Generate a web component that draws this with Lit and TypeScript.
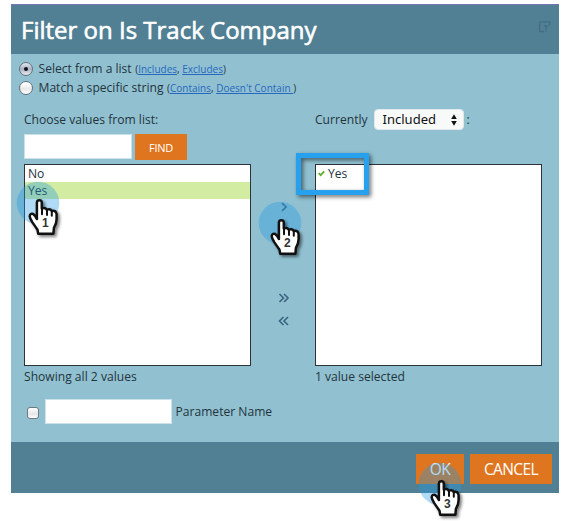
import { LitElement, html, css, svg } from "lit";
import { customElement, property } from "lit/decorators.js";

@customElement("step-pointer")
class StepPointer extends LitElement {
  @property() step = "1";
  static styles = css`
    :host { position: absolute; width: 54px; height: 64px; pointer-events: none; }
    svg { display: block; overflow: visible; }
    .halo { fill: #2499e4; fill-opacity: 0.36; }
    .hand { fill: #fff; stroke: #111; stroke-width: 2.5; stroke-linejoin: round; filter: drop-shadow(2px 2px 1.5px rgba(0, 0, 0, 0.5)); }
    .fold { fill: none; stroke: #111; stroke-width: 2; stroke-linecap: round; }
    .num { font: bold 12px "Liberation Sans", Arial, sans-serif; fill: #333; text-anchor: middle; }
  `;
  render() {
    return html`<svg width="54" height="64" viewBox="0 0 54 64">
      <circle class="halo" cx="22" cy="22" r="21.3"></circle>
      <path class="hand" d="M20.9 34.5V21.5Q21.1 19.2 23.3 19.2Q25.6 19.2 25.8 21.5V27.6Q29 26 30.8 28.7Q34.2 27.3 35.8 30Q40.2 29.2 40.6 33.1V38Q40.6 42.5 37.9 46.8L37.4 52.7H22.2L21.5 48.8Q18.8 44.8 16.4 41.4Q13.8 37.3 13.7 35.3Q14.1 32 17.2 33Q19.1 34.4 20.9 38Z"></path>
      <path class="fold" d="M20.9 33V38M26 28V33.3M31 29.3V34M35.8 30.7V34.8"></path>
      <text class="num" x="29.3" y="46.4">${this.step}</text>
    </svg>`;
  }
}

@customElement("app-root")
class AppRoot extends LitElement {
  static styles = css`
    :host { display: block; position: relative; width: 568px; height: 521px; overflow: hidden; background: #fff; color: #24343c; font: 12.1px/17px "Open Sans", sans-serif; }
    * { box-sizing: border-box; }
    .dialog { width: 548px; height: 489px; margin: 0 0 0 11px; display: flex; flex-direction: column; background: #91c1d1; }
    .wrap { padding-top: 4px; }
    header { height: 50px; flex: none; border-top: 1px solid #7775ba; background: #518094; display: flex; justify-content: space-between; padding: 0 8px 0 10px; }
    h1 { margin: 7px 0 0; font: 400 24px/36px "Open Sans", sans-serif; color: #fff; -webkit-text-stroke: 0.6px #fff; white-space: nowrap; }
    .help { margin-top: 16px; display: block; }
    main { height: 388px; padding: 5px 17px 0 8px; }
    .choice { height: 19px; display: flex; align-items: center; white-space: nowrap; }
    .radio { width: 14px; height: 14px; border-radius: 50%; border: 1px solid #66727a; background: linear-gradient(#fff 20%, #e8e8e8 55%, #fff); margin-right: 5.5px; display: grid; place-items: center; }
    .on { background: linear-gradient(#e4e8f0, #aab3c2 50%, #e9edf4); }
    .on::after { content: ""; width: 4px; height: 4px; border-radius: 50%; background: #101418; }
    .links { font-size: 10px; margin-left: 3.5px; padding-top: 1px; }
    a { color: #2668bd; text-decoration: underline; }
    .lists { display: grid; grid-template-columns: 227px 64px 227px; margin: 12px 0 0 5px; }
    .top { height: 55px; }
    .label { height: 25px; line-height: 21px; }
    .find { display: flex; gap: 3px; }
    .field { background: #fff; border: 1px solid #cbe2ea; height: 25px; width: 108px; }
    button { border: 0; padding: 0; background: #df761f; color: #fff; font-family: "Open Sans", sans-serif; white-space: nowrap; }
    .go { width: 52px; height: 26px; font-size: 11px; letter-spacing: -0.3px; padding-top: 1px; }
    .box { height: 202px; border: 1px solid #2d3337; background: #fff; }
    .row { height: 17px; padding-left: 3px; display: flex; align-items: center; }
    .sel { background: #d2eda1; }
    .tick { margin: 0 3px 0 -1px; }
    .status { padding-top: 2px; }
    .current { display: flex; align-items: flex-start; height: 25px; line-height: 21px; }
    .select { width: 90px; height: 21px; margin-left: 6px; margin-right: 3px; border-radius: 4px; border: 1px solid #e0e8eb; background: #f8f9f9; color: #111; display: flex; justify-content: space-between; align-items: center; padding: 0 6px 0 8px; font: 13px/19px "Noto Sans", sans-serif; }
    .moves svg { display: block; margin-left: 26.5px; }
    .one { margin-top: 93px; }
    .two { margin-top: 81px; }
    .three { margin-top: 13px; }
    .param { margin: 14px 0 0 8px; display: flex; align-items: center; }
    .check { width: 12px; height: 12px; margin-top: 3px; border: 1px solid #6e7980; border-radius: 3px; background: linear-gradient(#fff, #e6e6e6 60%, #fff); }
    .param .field { width: 127px; margin: 0 3.5px 0 6px; }
    footer { height: 51px; background: #518094; display: flex; justify-content: flex-end; gap: 6px; padding: 12px 7px 0 0; }
    footer button { height: 30px; font-size: 15.5px; letter-spacing: -0.6px; width: 48px; padding-bottom: 1px; }
    footer .cancel { width: 82px; }
    .marker { position: absolute; left: 296px; top: 153px; width: 73px; height: 42px; border: 5px solid #27a1ee; filter: drop-shadow(2px 2px 2px rgba(0, 0, 0, 0.55)); }
    .p1 { left: 15.5px; top: 181px; }
    .p2 { left: 258px; top: 200.5px; }
    .p3 { left: 417.5px; top: 462px; }
  `;
  private arrow(cls: string, d: string) {
    return html`<svg class=${cls} width="12" height="10" viewBox="0 0 12 10" fill="none" stroke="#3b6380" stroke-width="1.6">${svg`<path d=${d}></path>`}</svg>`;
  }
  render() {
    return html`<div class="wrap"><div class="dialog">
      <header><h1>Filter on Is Track Company</h1>
        <svg class="help" width="12" height="12" viewBox="0 0 12 12" fill="none" stroke="#426d85" stroke-width="1.3"><path d="M5 10.5H.6V.9H10.9V3.2L9.8 4.4M5.4 5.7Q5.8 4.5 7.2 4.8Q8.5 5.4 7.7 6.7L6.8 7.5V8.4M6.8 9.5V10.8"></path></svg>
      </header>
      <main>
        <div class="choice"><span class="radio on"></span><span>Select from a list</span><span class="links">(<a>Includes</a>, <a>Excludes</a>)</span></div>
        <div class="choice"><span class="radio"></span><span>Match a specific string</span><span class="links">(<a>Contains</a>, <a>Doesn't Contain </a>)</span></div>
        <div class="lists">
          <section><div class="top"><div class="label">Choose values from list:</div><div class="find"><div class="field"></div><button class="go">FIND</button></div></div>
            <div class="box"><div class="row">No</div><div class="row sel">Yes</div></div><div class="status">Showing all 2 values</div></section>
          <div class="moves">
            ${this.arrow("one", "M4 1L8 5L4 9")}
            ${this.arrow("two", "M1.5 1L5.5 5L1.5 9M6 1L10 5L6 9")}
            ${this.arrow("three", "M5.5 1L1.5 5L5.5 9M10 1L6 5L10 9")}
          </div>
          <section><div class="top"><div class="current"><span>Currently</span><div class="select"><span>Included</span><svg width="6" height="12" viewBox="0 0 6 12"><path d="M3 .3L5.8 5H.2ZM3 11.7L.2 7H5.8Z" fill="#111"></path></svg></div><span>:</span></div></div>
            <div class="box"><div class="row"><svg class="tick" width="7" height="7" viewBox="0 0 7 7"><path d="M.7 3.2L2.6 5.2L6.2 1.3" fill="none" stroke="#61ad2c" stroke-width="1.8"></path></svg>Yes</div></div><div class="status">1 value selected</div></section>
        </div>
        <div class="param"><span class="check"></span><span class="field"></span><span>Parameter Name</span></div>
      </main>
      <footer><button>OK</button><button class="cancel">CANCEL</button></footer>
    </div></div>
    <div class="marker"></div>
    <step-pointer class="p1" step="1"></step-pointer>
    <step-pointer class="p2" step="2"></step-pointer>
    <step-pointer class="p3" step="3"></step-pointer>`;
  }
}
